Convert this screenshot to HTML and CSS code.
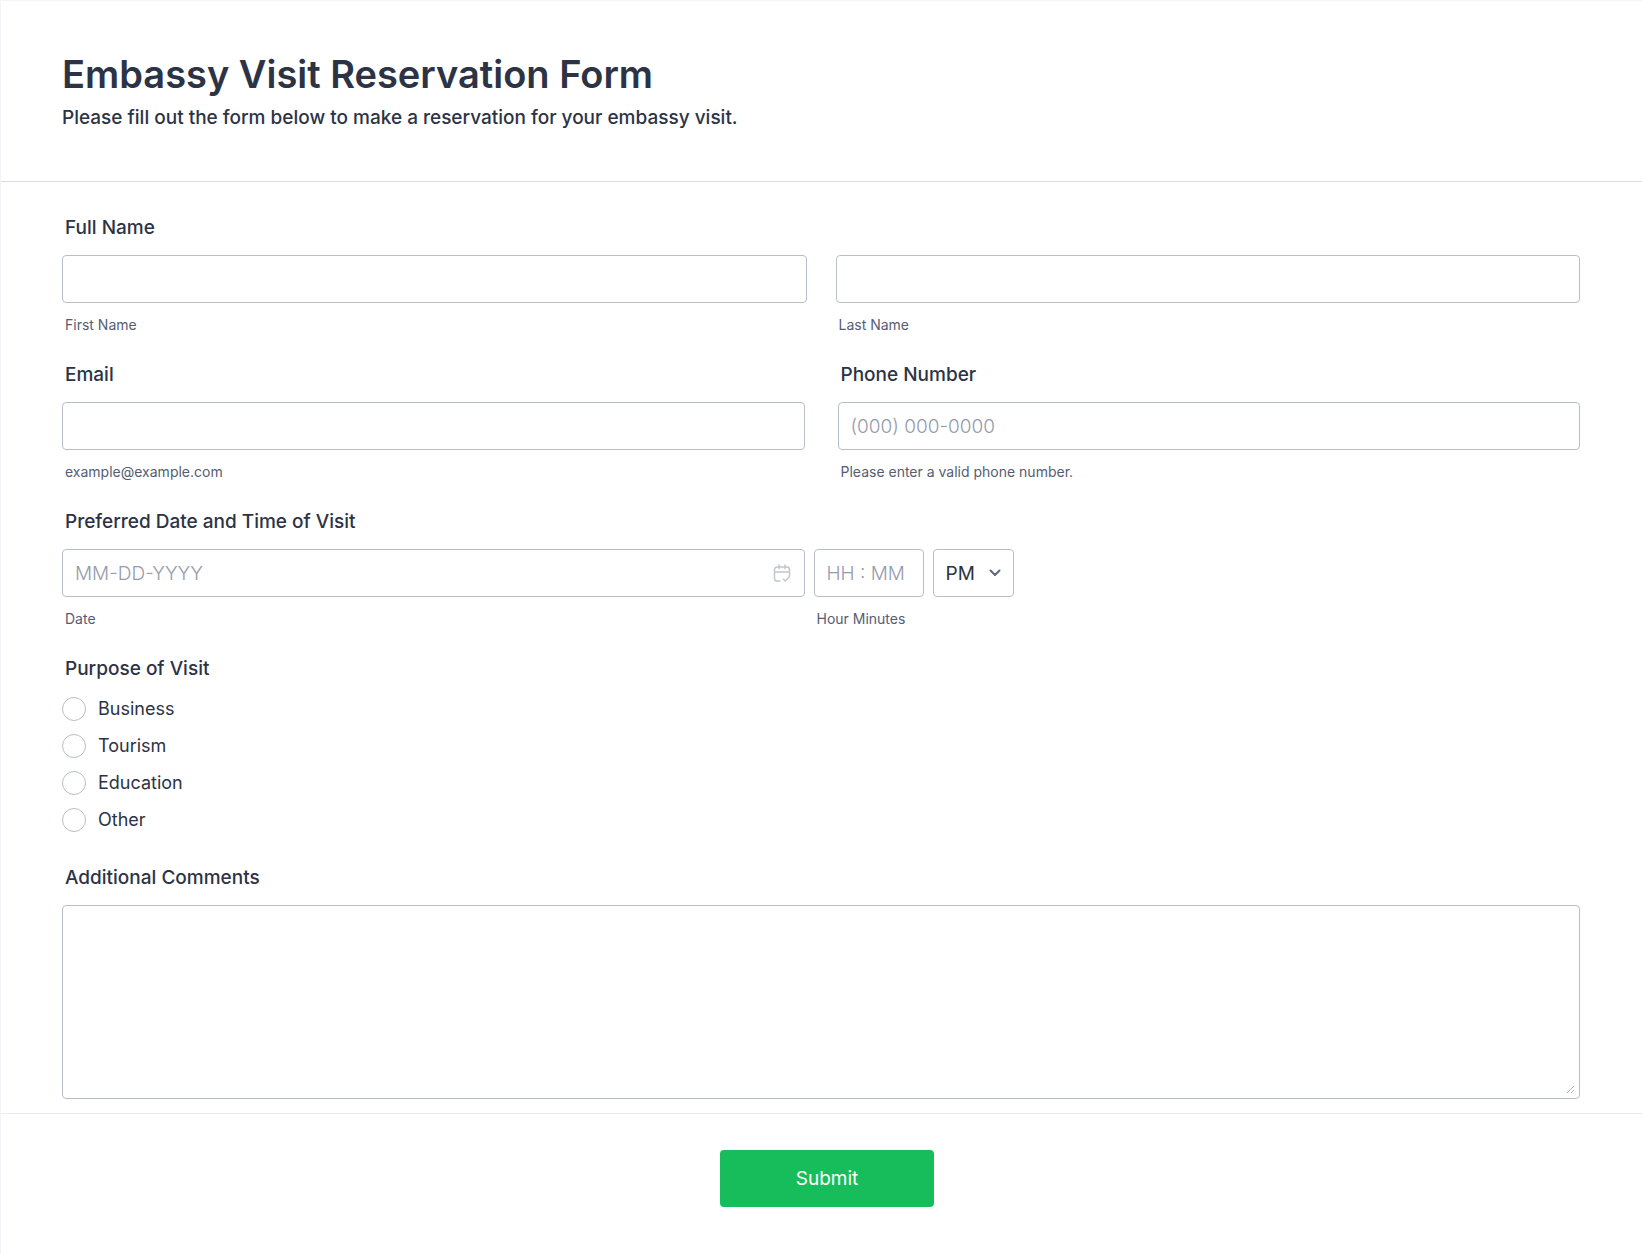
FILE: index.html
```html
<!DOCTYPE html>
<html lang="en">
<head>
  <meta charset="utf-8">
  <meta name="viewport" content="width=device-width, initial-scale=1">
  <title>Embassy Visit Reservation Form</title>
  <link rel="stylesheet" href="styles.css">
</head>
<body>
  <form class="form">
    <header class="form-header">
      <h1 class="form-title">Embassy Visit Reservation Form</h1>
      <p class="form-subtitle">Please fill out the form below to make a reservation for your embassy visit.</p>
    </header>

    <div class="form-body">
      <div class="question" role="group" aria-labelledby="name-label">
        <div class="label" id="name-label">Full Name</div>
        <div class="name-grid">
          <div class="field">
            <input class="control" type="text" id="first-name">
            <label class="sublabel" for="first-name">First Name</label>
          </div>
          <div class="field">
            <input class="control" type="text" id="last-name">
            <label class="sublabel" for="last-name">Last Name</label>
          </div>
        </div>
      </div>

      <div class="half-grid">
        <div class="question">
          <label class="label" for="email">Email</label>
          <div class="field">
            <input class="control" type="email" id="email" aria-describedby="email-hint">
            <span class="sublabel" id="email-hint">example@example.com</span>
          </div>
        </div>
        <div class="question">
          <label class="label" for="phone">Phone Number</label>
          <div class="field">
            <input class="control" type="tel" id="phone" placeholder="(000) 000-0000" aria-describedby="phone-hint">
            <span class="sublabel" id="phone-hint">Please enter a valid phone number.</span>
          </div>
        </div>
      </div>

      <div class="question" role="group" aria-labelledby="when-label">
        <div class="label" id="when-label">Preferred Date and Time of Visit</div>
        <div class="date-grid">
          <div class="field">
            <div class="control-wrap">
              <input class="control" type="text" id="date" placeholder="MM-DD-YYYY">
              <button class="calendar-button" type="button" aria-label="Choose date">
                <svg class="calendar-icon" viewBox="0 0 18 18" aria-hidden="true">
                  <path d="M7 17H4a2.500 2.500 0 0 1-2.500-2.500V5.500A2.500 2.500 0 0 1 4 3h10a2.500 2.500 0 0 1 2.500 2.500V12M1.500 8h15M6 1v3.500M12 1v3.500M10.500 15.200l1.800 1.800 4.200-4.200"/>
                </svg>
              </button>
            </div>
            <label class="sublabel" for="date">Date</label>
          </div>
          <div class="field">
            <input class="control" type="text" id="time" placeholder="HH : MM">
            <label class="sublabel" for="time">Hour Minutes</label>
          </div>
          <div class="control-wrap">
            <select class="control" aria-label="AM or PM">
              <option>AM</option>
              <option selected>PM</option>
            </select>
            <svg class="chevron" viewBox="0 0 12 8" aria-hidden="true"><path d="M1.500 1.500L6 6l4.500-4.500"/></svg>
          </div>
        </div>
      </div>

      <div class="question options-question" role="radiogroup" aria-labelledby="purpose-label">
        <div class="label" id="purpose-label">Purpose of Visit</div>
        <div class="options">
          <label class="option"><input class="radio" type="radio" name="purpose" value="business">Business</label>
          <label class="option"><input class="radio" type="radio" name="purpose" value="tourism">Tourism</label>
          <label class="option"><input class="radio" type="radio" name="purpose" value="education">Education</label>
          <label class="option"><input class="radio" type="radio" name="purpose" value="other">Other</label>
        </div>
      </div>

      <div class="question">
        <label class="label" for="comments">Additional Comments</label>
        <textarea class="control comments" id="comments"></textarea>
      </div>
    </div>

    <footer class="form-footer">
      <button class="submit" type="submit">Submit</button>
    </footer>
  </form>
</body>
</html>
```
FILE: styles.css
```css
*,
*::before,
*::after {
  box-sizing: border-box;
}

body {
  margin: 0;
  background: #fff;
  color: #2c3345;
  font-family: Inter, "Liberation Sans", sans-serif;
}

.form {
  min-height: 100vh;
  border-top: 1px solid #f3f3f8;
  border-left: 1px solid #f3f3f8;
}

.form-header {
  display: flex;
  flex-direction: column;
  gap: 8px;
  padding: 49px 61px 51px;
  border-bottom: 1px solid #d9dbe2;
}

.form-title {
  margin: 0;
  font-size: 38px;
  font-weight: 600;
  line-height: 48px;
}

.form-subtitle {
  margin: 0;
  font-size: 19px;
  font-weight: 500;
  line-height: 24px;
}

.form-body {
  display: flex;
  flex-direction: column;
  gap: 29px;
  padding: 34px 62px 14px 61px;
  border-bottom: 1px solid #ebecf2;
}

.question {
  display: flex;
  flex-direction: column;
  gap: 15px;
}

.label {
  padding-left: 3px;
  font-size: 19px;
  font-weight: 500;
  line-height: 24px;
}

.name-grid,
.half-grid {
  display: grid;
  grid-template-columns: 1fr 1fr;
  gap: 29px;
}

.half-grid {
  gap: 33px;
}

.date-grid {
  display: grid;
  grid-template-columns: calc((100% - 33px) / 2) 110px 81px;
  gap: 9px;
}

.field {
  display: flex;
  flex-direction: column;
  gap: 13px;
}

.sublabel {
  padding-left: 3px;
  color: #565d72;
  font-size: 14px;
  line-height: 18px;
}

.control {
  display: block;
  width: 100%;
  height: 48px;
  margin: 0;
  padding: 0 12px;
  border: 1px solid #b8bdc9;
  border-radius: 4px;
  background: #fff;
  color: #2c3345;
  font-family: inherit;
  font-size: 19px;
}

.control::placeholder {
  color: #959bab;
  font-weight: 300;
  opacity: 1;
}

select.control {
  appearance: none;
}

.control-wrap {
  position: relative;
}

.calendar-button {
  position: absolute;
  top: 15px;
  right: 14px;
  width: 18px;
  height: 18px;
  padding: 0;
  border: 0;
  background: none;
}

.calendar-icon {
  display: block;
  width: 18px;
  height: 18px;
  fill: none;
  stroke: #c3c6d0;
  stroke-width: 1.5;
  stroke-linecap: round;
  stroke-linejoin: round;
}

.chevron {
  position: absolute;
  top: 20px;
  right: 13px;
  width: 12px;
  height: 8px;
  fill: none;
  stroke: #5f6778;
  stroke-width: 2;
  stroke-linecap: round;
  stroke-linejoin: round;
  pointer-events: none;
}

.options-question {
  gap: 16px;
  padding-bottom: 5px;
}

.options {
  display: flex;
  flex-direction: column;
  align-items: flex-start;
  gap: 13px;
}

.option {
  display: flex;
  align-items: center;
  gap: 12px;
  font-size: 18px;
  line-height: 24px;
}

.radio {
  appearance: none;
  width: 24px;
  height: 24px;
  margin: 0;
  border: 1px solid #b8bdc9;
  border-radius: 50%;
}

.radio:checked {
  border: 7px solid #18bd5b;
}

.comments {
  height: 194px;
  padding: 12px;
  resize: vertical;
}

.comments::-webkit-resizer {
  background: url("data:image/svg+xml,%3Csvg xmlns='http://www.w3.org/2000/svg' width='15' height='15'%3E%3Cpath d='M3 10l7-7M7 10l3-3' stroke='%23b4b7c2' fill='none'/%3E%3C/svg%3E") no-repeat;
}

.form-footer {
  display: flex;
  justify-content: center;
  padding: 36px 50px 46px 61px;
}

.submit {
  width: 214px;
  height: 57px;
  border: 0;
  border-radius: 4px;
  background: #18bd5b;
  color: #fff;
  font-family: inherit;
  font-size: 19px;
}
```
